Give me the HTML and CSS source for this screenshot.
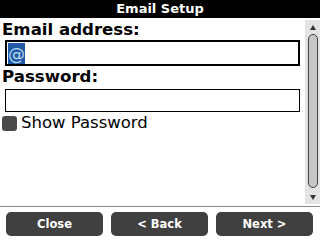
FILE: index.html
```html
<!DOCTYPE html>
<html>
<head>
<meta charset="utf-8">
<link rel="stylesheet" href="styles.css">
</head>
<body>
<div class="screen">
  <div class="titlebar">Email Setup</div>
  <div class="main">
    <div class="content">
      <div class="label">Email address:</div>
      <div class="field field-focus"><span class="cursor">@</span></div>
      <div class="label">Password:</div>
      <div class="field field-plain"></div>
      <div class="check-row"><span class="checkbox"></span><span class="check-label">Show Password</span></div>
    </div>
    <div class="scrollbar">
      <span class="arrow-up"></span>
      <span class="thumb"></span>
      <span class="arrow-down"></span>
    </div>
  </div>
  <div class="footer">
    <div class="btn">Close</div>
    <div class="btn">&lt; Back</div>
    <div class="btn">Next &gt;</div>
  </div>
</div>
</body>
</html>
```
FILE: styles.css
```css
html, body {
  margin: 0;
  padding: 0;
  background: #ffffff;
}
.screen {
  width: 320px;
  height: 240px;
  display: flex;
  flex-direction: column;
  font-family: "DejaVu Sans", sans-serif;
  color: #000;
  overflow: hidden;
}
.titlebar {
  height: 18px;
  line-height: 17px;
  background: #000;
  color: #fff;
  font-weight: bold;
  font-size: 13px;
  text-align: center;
}
.main {
  height: 188px;
  display: flex;
}
.content {
  flex: 1;
  display: flex;
  flex-direction: column;
  padding-top: 2px;
}
.label {
  font-weight: bold;
  font-size: 16.6px;
  line-height: 19px;
  padding-left: 2px;
}
.field {
  margin-left: 5px;
  margin-right: 5px;
  box-sizing: border-box;
}
.field-focus {
  margin-top: 1px;
  height: 26px;
  border: 2px solid #000;
  padding: 1px 0 0 1px;
  margin-bottom: 1px;
}
.cursor {
  display: flex;
  width: 17px;
  height: 21px;
  background: #1f5aa6;
  color: #b8d6f4;
  font-size: 17px;
  align-items: center;
  justify-content: center;
}
.field-plain {
  margin-top: 3px;
  height: 23px;
  border: 1px solid #000;
}
.check-row {
  display: flex;
  align-items: center;
  margin-top: 2px;
  padding-left: 2px;
  gap: 4px;
}
.checkbox {
  width: 15px;
  height: 15px;
  background: #4a4a4a;
  border-radius: 3px;
}
.check-label {
  font-size: 16.5px;
  line-height: 18px;
}
.scrollbar {
  width: 15px;
  background: #e4e4e4;
  display: flex;
  flex-direction: column;
  align-items: center;
  margin-top: 2px;
  margin-bottom: 2px;
}
.arrow-up {
  margin-top: 5px;
  width: 0;
  height: 0;
  border-left: 3px solid transparent;
  border-right: 3px solid transparent;
  border-bottom: 5px solid #333;
}
.thumb {
  margin-top: 4px;
  width: 10px;
  flex: 1;
  box-sizing: border-box;
  border: 1px solid #444;
  background: #c6c6c6;
  border-radius: 5px;
}
.arrow-down {
  margin-top: 7px;
  margin-bottom: 4px;
  width: 0;
  height: 0;
  border-left: 3px solid transparent;
  border-right: 3px solid transparent;
  border-top: 5px solid #333;
}
.footer {
  flex: 1;
  border-top: 1px solid #888;
  display: flex;
  gap: 8px;
  padding: 5px 7px 4px 6px;
}
.btn {
  flex: 1;
  height: 24px;
  background: #404040;
  border-radius: 5px;
  color: #fff;
  font-weight: bold;
  font-size: 11.5px;
  display: flex;
  align-items: center;
  justify-content: center;
}
```
